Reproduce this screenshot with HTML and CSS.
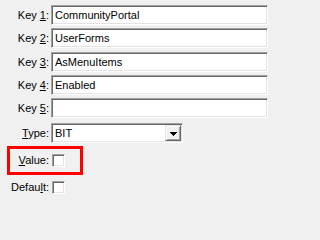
FILE: index.html
```html
<!DOCTYPE html>
<html>
<head>
<meta charset="utf-8">
<link rel="stylesheet" href="styles.css">
</head>
<body>
<div class="form">
  <div class="row key-row">
    <label class="lbl"><span>Key <u>1</u>:</span></label>
    <div class="input">CommunityPortal</div>
  </div>
  <div class="row key-row">
    <label class="lbl"><span>Key <u>2</u>:</span></label>
    <div class="input">UserForms</div>
  </div>
  <div class="row key-row">
    <label class="lbl"><span>Key <u>3</u>:</span></label>
    <div class="input">AsMenuItems</div>
  </div>
  <div class="row key-row">
    <label class="lbl"><span>Key <u>4</u>:</span></label>
    <div class="input">Enabled</div>
  </div>
  <div class="row key-row">
    <label class="lbl"><span>Key <u>5</u>:</span></label>
    <div class="input"></div>
  </div>
  <div class="row sel-row">
    <label class="lbl"><span><u>T</u>ype:</span></label>
    <div class="select">
      <span class="sel-text">BIT</span>
      <span class="drop"><svg width="7" height="4" viewBox="0 0 7 4" shape-rendering="crispEdges"><path d="M0 0h7v1H0zM1 1h5v1H1zM2 2h3v1H2zM3 3h1v1H3z" fill="#000"/></svg></span>
    </div>
  </div>
  <div class="row chk-row">
    <label class="lbl"><span><u>V</u>alue:</span></label>
    <span class="check"></span>
  </div>
  <div class="row chk-row">
    <label class="lbl"><span>Defau<u>l</u>t:</span></label>
    <span class="check"></span>
  </div>
  <div class="highlight"></div>
</div>
</body>
</html>
```

FILE: styles.css
```css
html, body {
  margin: 0;
  padding: 0;
  background: #f0f0f0;
}
body {
  width: 274px;
  height: 200px;
  overflow: hidden;
  font-family: "Liberation Sans", Arial, sans-serif;
  font-size: 11px;
  color: #000;
}
.form {
  position: relative;
  display: flex;
  flex-direction: column;
  padding-top: 5px;
}
.row {
  display: flex;
  align-items: center;
  height: 20px;
}
.key-row + .key-row { margin-top: 3.25px; }
.sel-row { margin-top: 5px; }
.chk-row { margin-top: 7px; }
.lbl {
  box-sizing: border-box;
  width: 51px;
  flex: none;
  padding-right: 2px;
  text-align: right;
  white-space: nowrap;
}
.lbl u { text-underline-offset: 1px; }
.input {
  box-sizing: border-box;
  width: 217px;
  height: 20px;
  background: #fff;
  border: 1px solid;
  border-color: #a0a0a0 #fff #fff #a0a0a0;
  box-shadow: inset 1px 1px 0 #696969, inset -1px -1px 0 #e3e3e3;
  padding: 0 3px;
  line-height: 18px;
  white-space: nowrap;
  overflow: hidden;
}
.select {
  box-sizing: border-box;
  width: 132px;
  height: 20px;
  background: #fff;
  border: 1px solid;
  border-color: #a0a0a0 #fff #fff #a0a0a0;
  box-shadow: inset 1px 1px 0 #696969, inset -1px -1px 0 #e3e3e3;
  padding: 1px;
  display: flex;
  align-items: center;
}
.sel-text {
  flex: 1;
  padding-left: 2px;
  line-height: 16px;
}
.drop {
  box-sizing: border-box;
  width: 16px;
  height: 16px;
  background: #f0f0f0;
  border: 1px solid;
  border-color: #e3e3e3 #696969 #696969 #e3e3e3;
  box-shadow: inset 1px 1px 0 #fff, inset -1px -1px 0 #a0a0a0;
  display: flex;
  align-items: center;
  justify-content: center;
}
.drop svg { display: block; margin-top: 1px; }
.check {
  box-sizing: border-box;
  flex: none;
  width: 13px;
  height: 13px;
  margin-left: 1px;
  background: #fff;
  border: 1px solid;
  border-color: #a0a0a0 #fff #fff #a0a0a0;
  box-shadow: inset 1px 1px 0 #696969, inset -1px -1px 0 #e3e3e3;
}
.highlight {
  position: absolute;
  left: 7px;
  top: 146px;
  width: 76px;
  height: 29px;
  box-sizing: border-box;
  border: 3px solid #ff0000;
}
```
